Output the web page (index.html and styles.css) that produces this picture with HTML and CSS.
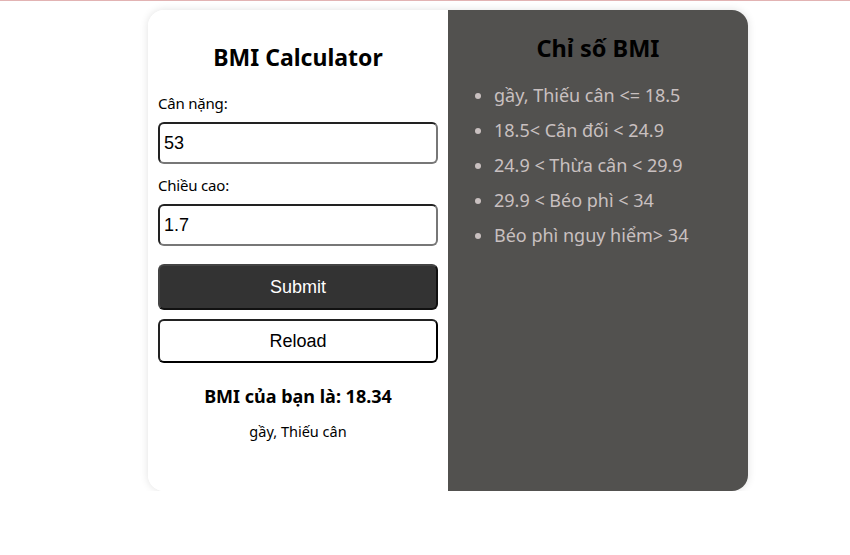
FILE: index.html
```html
<!DOCTYPE html>
<html lang="vi">
<head>
<meta charset="utf-8">
<title>BMI Calculator</title>
<link rel="stylesheet" href="styles.css">
</head>
<body>
<div class="topline"></div>
<main class="card">
  <section class="calc">
    <h1 class="title">BMI Calculator</h1>
    <label class="label">Cân nặng:</label>
    <input class="field" type="text" value="53">
    <label class="label">Chiều cao:</label>
    <input class="field" type="text" value="1.7">
    <button class="btn btn-submit">Submit</button>
    <button class="btn btn-reload">Reload</button>
    <p class="result">BMI của bạn là: 18.34</p>
    <p class="status">gầy, Thiếu cân</p>
  </section>
  <section class="info">
    <h2 class="info-title">Chỉ số BMI</h2>
    <ul class="ranges">
      <li>gầy, Thiếu cân &lt;= 18.5</li>
      <li>18.5&lt; Cân đối &lt; 24.9</li>
      <li>24.9 &lt; Thừa cân &lt; 29.9</li>
      <li>29.9 &lt; Béo phì &lt; 34</li>
      <li>Béo phì nguy hiểm&gt; 34</li>
    </ul>
  </section>
</main>
</body>
</html>
```
FILE: styles.css
```css
* { box-sizing: border-box; }
html, body { margin: 0; padding: 0; background: #fff; }
body {
  font-family: "Noto Sans", "Open Sans", sans-serif;
  color: #000;
}
.topline { height: 1px; background: #e2b3b3; }
.card {
  width: 600px;
  height: 481px;
  margin: 9px 0 0 148px;
  display: flex;
  border-radius: 16px;
  overflow: hidden;
  box-shadow: 0 0 8px rgba(0,0,0,0.12);
}
.calc {
  width: 300px;
  background: #fff;
  padding: 32px 10px 0 10px;
  display: flex;
  flex-direction: column;
}
.title {
  margin: 0 0 22px 0;
  font-size: 23px;
  font-weight: 700;
  text-align: center;
  line-height: 30px;
}
.label {
  font-size: 15px;
  line-height: 18px;
  margin-bottom: 10px;
  letter-spacing: -0.2px;
  font-weight: 400;
}
.field {
  width: 280px;
  height: 42px;
  border: 2px solid;
  border-color: #222 #777 #777 #222;
  border-radius: 6px;
  font-family: "Liberation Sans", Arial, sans-serif;
  font-size: 18px;
  padding: 0 4px;
  margin: 0 0 12px 0;
  color: #000;
  background: #fff;
}
.btn {
  width: 280px;
  font-family: "Liberation Sans", Arial, sans-serif;
  font-size: 18px;
  border-radius: 6px;
  border: 2px solid;
  padding: 0;
}
.btn-submit {
  margin-top: 6px;
  height: 46px;
  background: #333;
  color: #fff;
  border-color: #444 #111 #111 #444;
}
.btn-reload {
  margin-top: 9px;
  height: 44px;
  background: #fff;
  color: #000;
  border-color: #222 #000 #000 #222;
}
.result {
  margin: 21px 0 0 0;
  font-size: 18px;
  font-weight: 700;
  text-align: center;
  line-height: 24px;
}
.status {
  margin: 13px 0 0 0;
  font-size: 14.5px;
  text-align: center;
  line-height: 20px;
}
.info {
  width: 300px;
  background: #52514f;
  padding: 22px 0 0 0;
}
.info-title {
  margin: 0 0 14px 0;
  font-size: 23.5px;
  font-weight: 700;
  text-align: center;
  line-height: 32px;
  color: #000;
}
.ranges {
  margin: 0;
  padding: 0 0 0 46px;
  color: #c9c0c0;
  font-size: 18px;
}
.ranges li {
  line-height: 35px;
}
.ranges li::marker { color: #c9c0c0; }
```
